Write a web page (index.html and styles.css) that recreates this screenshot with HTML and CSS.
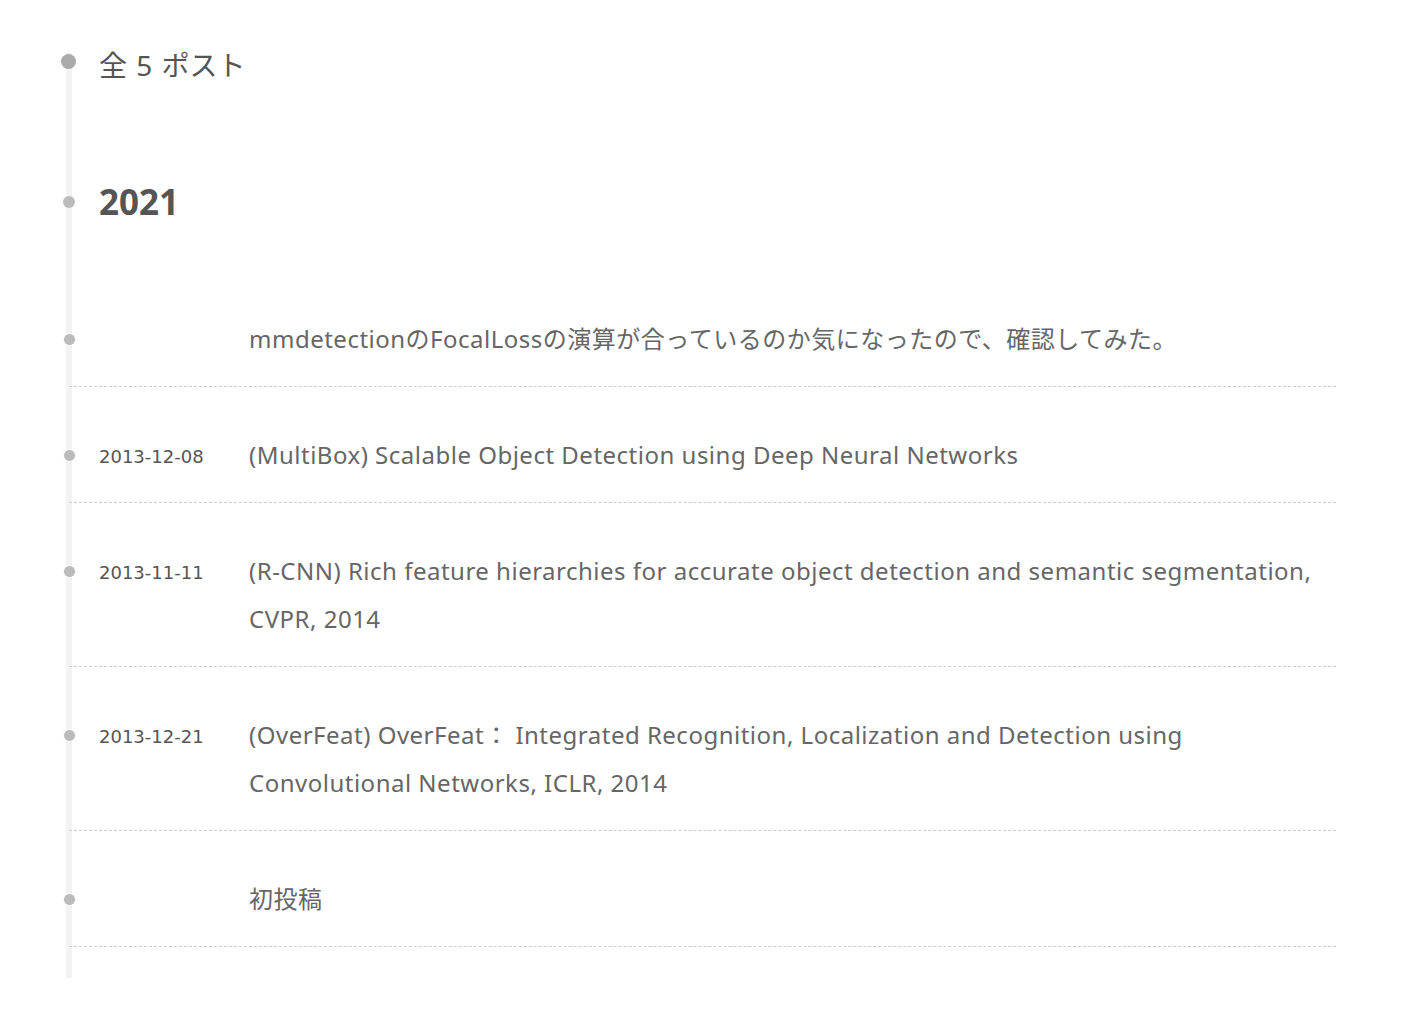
FILE: index.html
```html
<!DOCTYPE html>
<html lang="ja">
<head>
<meta charset="utf-8">
<title>アーカイブ</title>
<link rel="stylesheet" href="styles.css">
</head>
<body>
<main class="page">
  <section class="timeline">
    <h2 class="collection-title">全 5 ポスト</h2>
    <h3 class="collection-year">2021</h3>
    <article class="post">
      <span class="post-date"></span>
      <span class="post-title">mmdetectionのFocalLossの演算が合っているのか気になったので、確認してみた。</span>
    </article>
    <article class="post">
      <span class="post-date">2013-12-08</span>
      <span class="post-title">(MultiBox) Scalable Object Detection using Deep Neural Networks</span>
    </article>
    <article class="post">
      <span class="post-date">2013-11-11</span>
      <span class="post-title">(R-CNN) Rich feature hierarchies for accurate object detection and semantic segmentation, CVPR, 2014</span>
    </article>
    <article class="post">
      <span class="post-date">2013-12-21</span>
      <span class="post-title">(OverFeat) OverFeat： Integrated Recognition, Localization and Detection using Convolutional Networks, ICLR, 2014</span>
    </article>
    <article class="post">
      <span class="post-date"></span>
      <span class="post-title">初投稿</span>
    </article>
  </section>
</main>
</body>
</html>
```

FILE: styles.css
```css
* { box-sizing: border-box; }
html, body { margin: 0; padding: 0; background: #fff; }
body {
  font-family: "Noto Sans", "Noto Sans CJK JP", sans-serif;
  color: #555;
}
.page {
  padding: 45px 80px 0 69px;
}
.timeline {
  position: relative;
  padding-bottom: 31px;
}
.timeline::before {
  content: "";
  position: absolute;
  left: -3px;
  top: 8px;
  bottom: 0;
  width: 6px;
  background: #f3f3f3;
}
.collection-title {
  position: relative;
  margin: 0;
  padding-left: 30px;
  font-size: 28px;
  font-weight: 400;
  line-height: 40px;
  color: #555;
  word-spacing: 2px;
}
.collection-title::before {
  content: "";
  position: absolute;
  left: -8px;
  top: 9px;
  width: 15px;
  height: 15px;
  border-radius: 50%;
  background: #aaa;
}
.collection-year {
  position: relative;
  margin: 91px 0 88px;
  padding-left: 30px;
  font-size: 35px;
  font-weight: 700;
  line-height: 51px;
  color: #555;
}
.collection-year::before {
  content: "";
  position: absolute;
  left: -6px;
  top: 20px;
  width: 12px;
  height: 12px;
  border-radius: 50%;
  background: #bbb;
}
.post {
  position: relative;
  display: flex;
  align-items: flex-start;
  margin-top: 44px;
  padding: 0 0 23px 30px;
  border-bottom: 1px dashed #ccc;
  line-height: 48px;
}
.post::before {
  content: "";
  position: absolute;
  left: -6px;
  top: 18px;
  width: 11px;
  height: 11px;
  border-radius: 50%;
  background: #bbb;
  border: 1px solid #fff;
}
.post-date {
  flex: 0 0 150px;
  padding-top: 4px;
  line-height: 44px;
  font-family: "DejaVu Sans", "Noto Sans CJK JP", sans-serif;
  font-size: 18px;
  color: #555;
}
.post-title {
  flex: 1;
  font-size: 24px;
  letter-spacing: 0.5px;
  color: #666;
}
```
